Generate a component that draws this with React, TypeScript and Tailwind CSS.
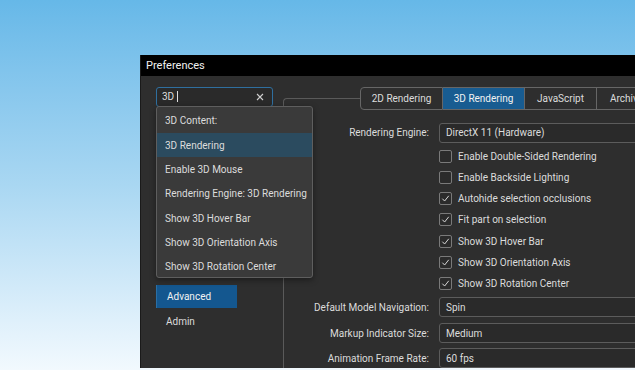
import React from 'react';

const font = { fontFamily: 'Roboto, "Noto Sans", sans-serif' };

const Check: React.FC<{ checked?: boolean; label: string }> = ({ checked, label }) => (
  <div className="flex h-[21.2px] items-center gap-[6px]">
    <div className="flex h-[13px] w-[13px] items-center justify-center rounded-[2px] border border-[#7a7a7a] bg-[#2b2b2b]">
      {checked && (
        <svg width="9" height="9" viewBox="0 0 10 10" fill="none">
          <path d="M1.5 5.2L4 7.8L8.6 2" stroke="#d8d8d8" strokeWidth="1.1" />
        </svg>
      )}
    </div>
    <span className="whitespace-nowrap">{label}</span>
  </div>
);

const Field: React.FC<{ label: string; value: string; className?: string }> = ({ label, value, className }) => (
  <div className={`flex items-center ${className ?? ''}`}>
    <div className="w-[146px] whitespace-nowrap pr-[1px] text-right">{label}</div>
    <div className="ml-[9px] flex h-[20px] w-[260px] items-center rounded-l-[3px] border border-[#5c5c5c] bg-[#2a2a2a] pl-[6px]">
      {value}
    </div>
  </div>
);

const results = [
  '3D Content:',
  '3D Rendering',
  'Enable 3D Mouse',
  'Rendering Engine: 3D Rendering',
  'Show 3D Hover Bar',
  'Show 3D Orientation Axis',
  'Show 3D Rotation Center',
];

const tabs = [
  { label: '2D Rendering', w: 'w-[83px]' },
  { label: '3D Rendering', w: 'w-[82px]', active: true },
  { label: 'JavaScript', w: 'w-[72px]' },
  { label: 'Archive', w: 'w-[60px]' },
];

export default function App() {
  return (
    <div
      className="h-[370px] w-[635px] overflow-hidden bg-gradient-to-b from-[#66b8e8] via-[#a9d7f2] to-[#f2f9fe] pl-[140px] pt-[55px] text-[10px] text-[#dcdcdc]"
      style={font}
    >
      <div className="flex h-[313px] w-[560px] flex-col border-l border-[#1a1a1a] bg-[#2e2e2e]">
        <div className="flex h-[22px] items-center bg-black pl-[5px] pt-[1px] text-[11px] text-[#f0f0f0]">Preferences</div>

        <div className="relative flex flex-1">
          {/* left nav */}
          <div className="flex w-[142px] flex-col pl-[15px] pt-[11px]">
            <div className="flex h-[20px] w-[117px] items-center rounded-[3px] border border-[#2f6f9f] bg-[#2a2a2a] pl-[5px] pr-[8px]">
              <span>3D</span>
              <span className="ml-[3px] h-[11px] w-px bg-[#e0e0e0]" />
              <svg className="ml-auto" width="8" height="8" viewBox="0 0 8 8">
                <path d="M1 1L7 7M7 1L1 7" stroke="#cfcfcf" strokeWidth="1.1" />
              </svg>
            </div>
            <div className="mt-[178px] flex flex-col">
              <div className="flex h-[23px] w-[81px] items-center border-l border-[#2a6fa5] bg-[#14578f] pl-[10px] pt-[1px] text-[#f2f2f2]">Advanced</div>
              <div className="flex h-[27px] items-center pl-[10px] pt-[1px]">Admin</div>
            </div>
          </div>

          {/* search results overlay */}
          <div className="absolute left-[15px] top-[30px] z-10 h-[172px] w-[157px] rounded-[3px] border border-[#5e5e5e] bg-[#3a3a3a] pt-[2px] shadow-[0_2px_6px_rgba(0,0,0,0.4)]">
            {results.map((r, i) => (
              <div
                key={r}
                className={`flex h-[24.33px] items-center whitespace-nowrap pl-[8px] ${i === 1 ? 'bg-[#2b4b5f]' : ''}`}
              >
                {r}
              </div>
            ))}
          </div>

          {/* content panel */}
          <div className="mt-[22px] flex flex-1 flex-col rounded-tl-[4px] border-l border-t border-[#5a5a5a]">
            <div className="-mt-[12px] ml-[76px] flex h-[23px]">
              {tabs.map((t, i) => (
                <div
                  key={t.label}
                  className={`flex shrink-0 items-center justify-center pt-[1px] border-y border-r border-[#666] ${t.w} ${
                    i === 0 ? 'rounded-l-[4px] border-l' : ''
                  } ${t.active ? 'bg-[#185c91] text-[#f2f2f2]' : 'bg-[#2e2e2e]'}`}
                >
                  {t.label}
                </div>
              ))}
            </div>

            <div className="mt-[13px] flex flex-col">
              <Field label="Rendering Engine:" value="DirectX 11 (Hardware)" />
              <div className="ml-[155px] mt-[3px] flex flex-col">
                <Check label="Enable Double-Sided Rendering" />
                <Check label="Enable Backside Lighting" />
                <Check checked label="Autohide selection occlusions" />
                <Check checked label="Fit part on selection" />
                <Check checked label="Show 3D Hover Bar" />
                <Check checked label="Show 3D Orientation Axis" />
                <Check checked label="Show 3D Rotation Center" />
              </div>
              <Field className="mt-[3px]" label="Default Model Navigation:" value="Spin" />
              <Field className="mt-[6px]" label="Markup Indicator Size:" value="Medium" />
              <Field className="mt-[5px]" label="Animation Frame Rate:" value="60 fps" />
            </div>
          </div>
        </div>
      </div>
    </div>
  );
}
